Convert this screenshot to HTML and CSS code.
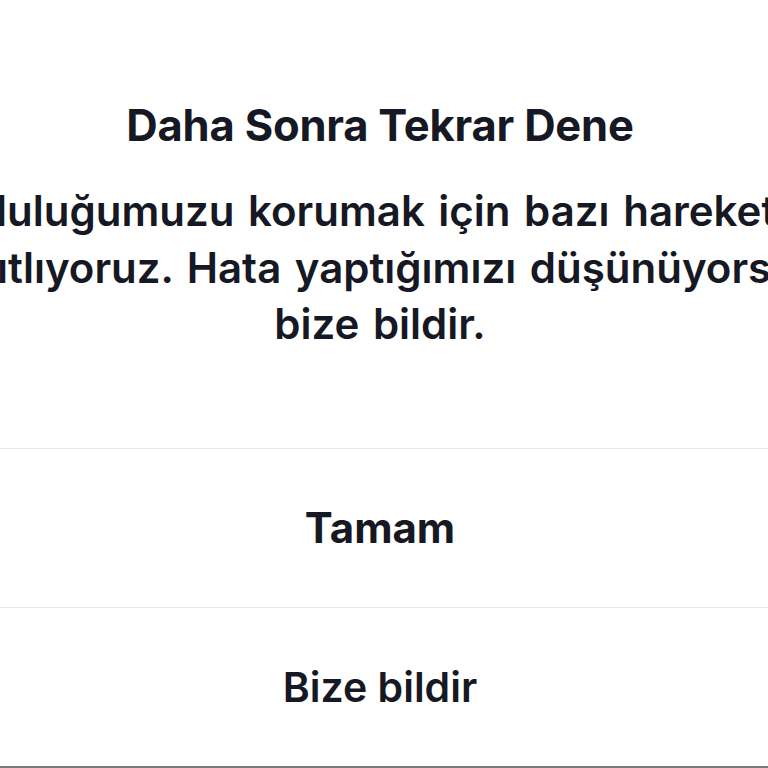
FILE: index.html
```html
<!DOCTYPE html>
<html lang="tr">
<head>
<meta charset="utf-8">
<title>Daha Sonra Tekrar Dene</title>
<link rel="stylesheet" href="styles.css">
</head>
<body>
<div class="dialog">
  <div class="header">
    <h1 class="title">Daha Sonra Tekrar Dene</h1>
  </div>
  <div class="message-wrap">
    <p class="message">Topluluğumuzu korumak için bazı hareketleri<br>kısıtlıyoruz. Hata yaptığımızı düşünüyorsan<br>bize bildir.</p>
  </div>
  <div class="actions">
    <button class="action action-primary" type="button">Tamam</button>
    <button class="action action-secondary" type="button">Bize bildir</button>
  </div>
</div>
</body>
</html>
```

FILE: styles.css
```css
html, body {
  margin: 0;
  padding: 0;
  background: #ffffff;
}
body {
  width: 768px;
  height: 768px;
  overflow: hidden;
  font-family: Inter, "Noto Sans", "Liberation Sans", sans-serif;
  color: #161823;
}
.dialog {
  display: flex;
  flex-direction: column;
  width: 760px;
}
.header {
  padding-top: 99px;
  text-align: center;
}
.title {
  margin: 0;
  font-size: 43.5px;
  line-height: 52px;
  font-weight: 700;
  letter-spacing: -0.2px;
}
.message-wrap {
  margin-top: 32px;
}
.message {
  margin: 0 0 0 -120px;
  width: 1000px;
  text-align: center;
  font-size: 42px;
  line-height: 56.5px;
  font-weight: 600;
  word-spacing: 3px;
  white-space: nowrap;
}
.actions {
  display: flex;
  flex-direction: column;
  margin-top: 95px;
  width: 768px;
}
.action {
  display: flex;
  align-items: center;
  justify-content: center;
  height: 159px;
  box-sizing: border-box;
  margin: 0;
  padding: 0 8px 0 0;
  border: 0;
  border-top: 1px solid #e8e8e8;
  background: #ffffff;
  font-family: inherit;
  color: #161823;
  font-size: 42px;
}
.action-primary {
  font-weight: 700;
}
.action-secondary {
  font-weight: 600;
  font-size: 41px;
  border-bottom: 2px solid #7a7a7a;
  height: 161px;
}
```
